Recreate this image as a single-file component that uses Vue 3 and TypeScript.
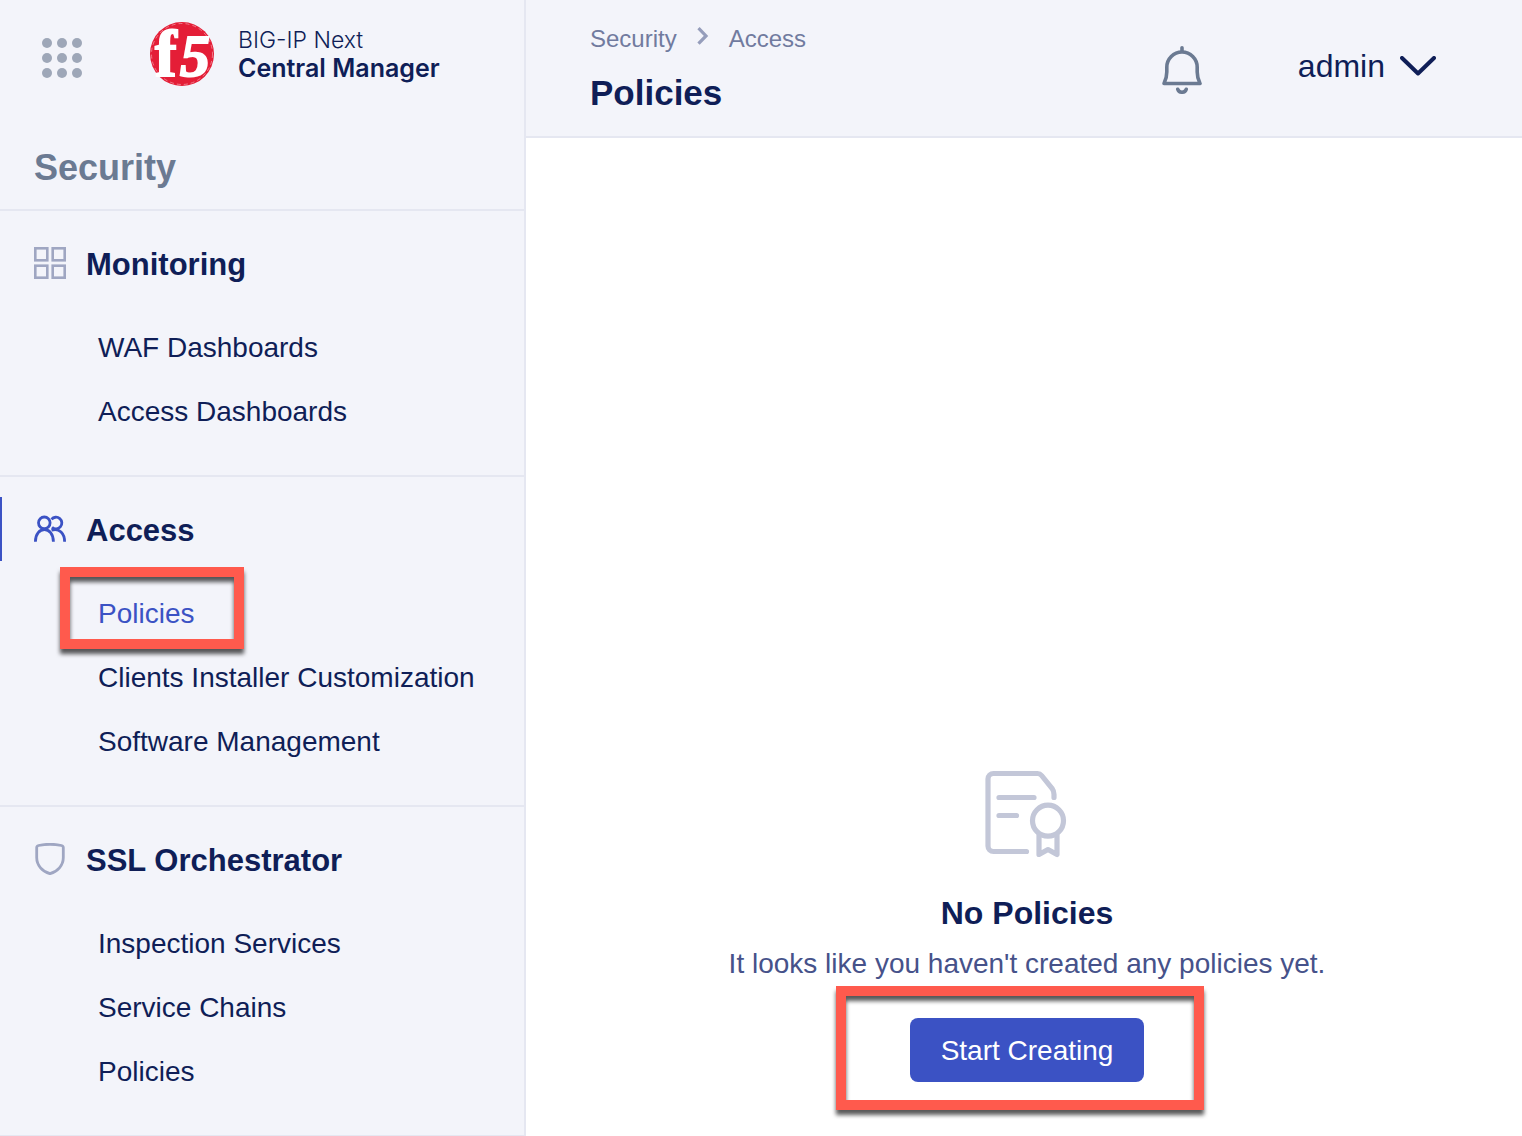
<script setup lang="ts">
interface NavItem {
  label: string
  active?: boolean
}

interface NavSection {
  title: string
  icon: 'grid' | 'users' | 'shield'
  active?: boolean
  items: NavItem[]
}

const sections: NavSection[] = [
  {
    title: 'Monitoring',
    icon: 'grid',
    items: [{ label: 'WAF Dashboards' }, { label: 'Access Dashboards' }],
  },
  {
    title: 'Access',
    icon: 'users',
    active: true,
    items: [
      { label: 'Policies', active: true },
      { label: 'Clients Installer Customization' },
      { label: 'Software Management' },
    ],
  },
  {
    title: 'SSL Orchestrator',
    icon: 'shield',
    items: [{ label: 'Inspection Services' }, { label: 'Service Chains' }, { label: 'Policies' }],
  },
]

const dots: number[] = [5, 20, 35]
</script>

<template>
  <div class="app">
    <aside class="sidebar">
      <div class="brand">
        <button class="icon-button" type="button" aria-label="Applications">
          <svg width="40" height="40" viewBox="0 0 40 40" fill="#9ea7b8">
            <template v-for="y in dots" :key="y">
              <circle v-for="x in dots" :key="x" :cx="x" :cy="y" r="5" />
            </template>
          </svg>
        </button>
        <svg class="logo" width="64" height="64" viewBox="0 0 64 64">
          <circle cx="32" cy="32" r="32" fill="#e41e37" />
          <circle cx="32" cy="32" r="30.5" fill="none" stroke="#f3a0aa" stroke-width="0.7" stroke-dasharray="4 3" />
          <g fill="#fff" stroke="#fff" font-family="Liberation Serif, serif" font-weight="bold">
            <text x="5" y="54" font-size="65" stroke-width="2">f</text>
            <text x="30" y="54" font-size="60" font-style="italic" stroke-width="2">5</text>
          </g>
        </svg>
        <div class="product">
          <span class="product-family">BIG-IP Next</span>
          <span class="product-name">Central Manager</span>
        </div>
      </div>
      <h2 class="area">Security</h2>

      <nav>
        <section v-for="section in sections" :key="section.title" class="section">
          <h3 class="section-title" :class="{ active: section.active }">
            <svg
              v-if="section.icon === 'grid'"
              width="32" height="32" viewBox="0 0 32 32" fill="none" stroke="#9fa6c2" stroke-width="2.6"
            >
              <rect x="1.3" y="1.3" width="12" height="12" />
              <rect x="18.7" y="1.3" width="12" height="12" />
              <rect x="1.3" y="18.7" width="12" height="12" />
              <rect x="18.7" y="18.7" width="12" height="12" />
            </svg>
            <svg
              v-else-if="section.icon === 'users'"
              width="32" height="32" viewBox="0 0 32 32" fill="none" stroke="#3b52c4" stroke-width="2.8"
            >
              <circle cx="10.3" cy="9.8" r="5.8" />
              <path d="M1.400 28.700C1.400 12.400 19.400 12.400 19.400 28.700" />
              <path d="M17.500 6.400A5.800 5.800 0 1 1 18 14.200" />
              <path d="M17.500 17.200C25.500 14.600 30.600 20.500 30.600 28.700" />
            </svg>
            <svg
              v-else
              width="32" height="32" viewBox="0 0 32 32" fill="none" stroke="#9fa6c2" stroke-width="2.8"
            >
              <path d="M2.700 4.600C2.700 3.400 3.400 2.800 4.600 2.500C12 .9 20 .9 27.400 2.500C28.600 2.800 29.300 3.400 29.300 4.600V14.500C29.300 22.500 23.500 28.600 16 30.700C8.500 28.600 2.700 22.500 2.700 14.500Z" />
            </svg>
            <span class="section-name">{{ section.title }}</span>
          </h3>
          <ul class="items">
            <li v-for="item in section.items" :key="item.label" class="item">
              <a href="#" class="link" :class="{ current: item.active }">{{ item.label }}</a>
            </li>
          </ul>
        </section>
      </nav>
    </aside>

    <main class="main">
      <header class="topbar">
        <div class="heading">
          <div class="crumbs">
            <a href="#">Security</a>
            <svg width="12" height="18" viewBox="0 0 12 18" fill="none" stroke="#959dbb" stroke-width="3.2">
              <path d="M1.500 1.200L9 8.900L1.500 16.700" />
            </svg>
            <a href="#">Access</a>
          </div>
          <h1 class="title">Policies</h1>
        </div>
        <div class="tools">
          <button class="icon-button" type="button" aria-label="Notifications">
            <svg
              width="40" height="48" viewBox="0 0 40 48" fill="none" stroke="#6b7a92"
              stroke-width="3.6" stroke-linecap="round" stroke-linejoin="round"
            >
              <path d="M20 1.800V5" />
              <path d="M2 37.500C4.300 33 4.800 30 4.800 26V21.200a15.200 15.200 0 0 1 30.400 0V26C35.200 30 35.700 33 38 37.500Z" />
              <path d="M15.800 43.300C17.300 47.200 22.700 47.200 24.200 43.300" />
            </svg>
          </button>
          <button class="user" type="button">
            <span>admin</span>
            <svg
              width="36" height="20" viewBox="0 0 36 20" fill="none" stroke="#0f1e57"
              stroke-width="4" stroke-linecap="round" stroke-linejoin="round"
            >
              <path d="M2 2L18 17.500L34 2" />
            </svg>
          </button>
        </div>
      </header>

      <div class="empty">
        <svg
          width="84" height="88" viewBox="0 0 84 88" fill="none" stroke="#c3c7d8"
          stroke-width="5.2" stroke-linecap="round" stroke-linejoin="round"
        >
          <path d="M41.500 81.500H8.500a5.500 5.500 0 0 1-5.500-5.500V9a5.500 5.500 0 0 1 5.500-5.500H52.500Q55 3.500 56.600 5.500L67 18.300Q69 21 69 24.500V27.500" />
          <path d="M14 27.500H49M14 45.500H31.500" />
          <circle cx="63" cy="50.700" r="15.500" />
          <path d="M54 65V84.500L63 79.500L72 84.500V65" />
        </svg>
        <h2 class="empty-title">No Policies</h2>
        <p class="empty-text">It looks like you haven't created any policies yet.</p>
        <button class="primary" type="button">Start Creating</button>
      </div>
    </main>
  </div>
</template>

<style>
body {
  margin: 0;
}
</style>

<style scoped>
.app {
  display: flex;
  height: 100vh;
  overflow: hidden;
  font-family: "Liberation Sans", Arial, sans-serif;
  color: #0f1e57;
  background: #fff;
}

h1,
h2,
h3,
p,
ul {
  margin: 0;
  padding: 0;
}

svg {
  display: block;
  flex: none;
}

button {
  font: inherit;
  color: inherit;
  border: 0;
  background: none;
  padding: 0;
  cursor: pointer;
}

a {
  color: inherit;
  text-decoration: none;
}

.sidebar {
  flex: none;
  width: 524px;
  background: #f3f4fa;
  border-right: 2px solid #e5e7f1;
}

.brand {
  display: flex;
  align-items: center;
  height: 108px;
  padding-left: 42px;
}

.brand .icon-button {
  padding-top: 8px;
}

.logo {
  margin-left: 68px;
  overflow: visible;
}

.product {
  display: flex;
  flex-direction: column;
  margin-left: 24px;
  font-family: Inter, sans-serif;
  line-height: 28px;
}

.product-family {
  font-size: 23px;
  font-weight: 300;
}

.product-name {
  font-size: 25px;
  font-weight: 600;
}

.area {
  box-sizing: border-box;
  height: 103px;
  padding: 40px 34px 0;
  border-bottom: 2px solid #e5e7f1;
  color: #6b7a92;
  font-size: 36px;
  line-height: 40px;
}

.section {
  padding: 20px 0 32px;
  border-bottom: 2px solid #e5e7f1;
}

.section-title {
  display: flex;
  align-items: center;
  gap: 20px;
  height: 64px;
  padding-left: 34px;
  font-size: 31px;
}

.section-title.active {
  padding-left: 32px;
  border-left: 2px solid #3b52c4;
  border-radius: 0 2px 2px 0;
}

.section-name {
  padding-top: 4px;
}

.items {
  margin-top: 20px;
  padding-left: 98px;
  list-style: none;
}

.item {
  display: flex;
  height: 64px;
}

.link {
  position: relative;
  font-size: 28px;
  line-height: 66px;
  white-space: nowrap;
}

.link.current {
  color: #3b52c4;
}

.link.current::before,
.primary::before {
  content: "";
  position: absolute;
  border: 10px solid #ff5a4d;
  filter: drop-shadow(0 5px 2px rgba(0, 0, 0, 0.65));
  pointer-events: none;
}

.link.current::before {
  inset: -14px -50px -4px -38px;
}

.main {
  display: flex;
  flex: 1;
  flex-direction: column;
  min-width: 0;
}

.topbar {
  display: flex;
  justify-content: space-between;
  height: 136px;
  padding: 0 86px 0 64px;
  background: #f3f4fa;
  border-bottom: 2px solid #e5e7f1;
}

.heading {
  padding-top: 24px;
}

.crumbs {
  display: flex;
  align-items: center;
  gap: 20px;
  color: #717b9f;
  font-size: 24px;
  line-height: 30px;
}

.crumbs svg {
  margin-bottom: 6px;
}

.title {
  margin-top: 20px;
  font-size: 35px;
  line-height: 38px;
}

.tools {
  display: flex;
  align-items: center;
  gap: 96px;
  height: 132px;
}

.tools .icon-button {
  padding-top: 8px;
}

.user {
  display: flex;
  align-items: center;
  gap: 15px;
  font-size: 32px;
}

.empty {
  display: flex;
  flex: 1;
  flex-direction: column;
  align-items: center;
  justify-content: flex-end;
  padding: 0 0 54px 6px;
}

.empty-title {
  margin-top: 36px;
  font-size: 32px;
  line-height: 38px;
}

.empty-text {
  margin-top: 14px;
  color: #46528a;
  font-size: 28px;
  line-height: 36px;
}

.primary {
  position: relative;
  height: 64px;
  margin-top: 36px;
  padding: 2px 31px 0;
  border-radius: 8px;
  background: #3b52c4;
  color: #fff;
  font-size: 28px;
}

.primary::before {
  inset: -32px -60px -28px -74px;
}
</style>
